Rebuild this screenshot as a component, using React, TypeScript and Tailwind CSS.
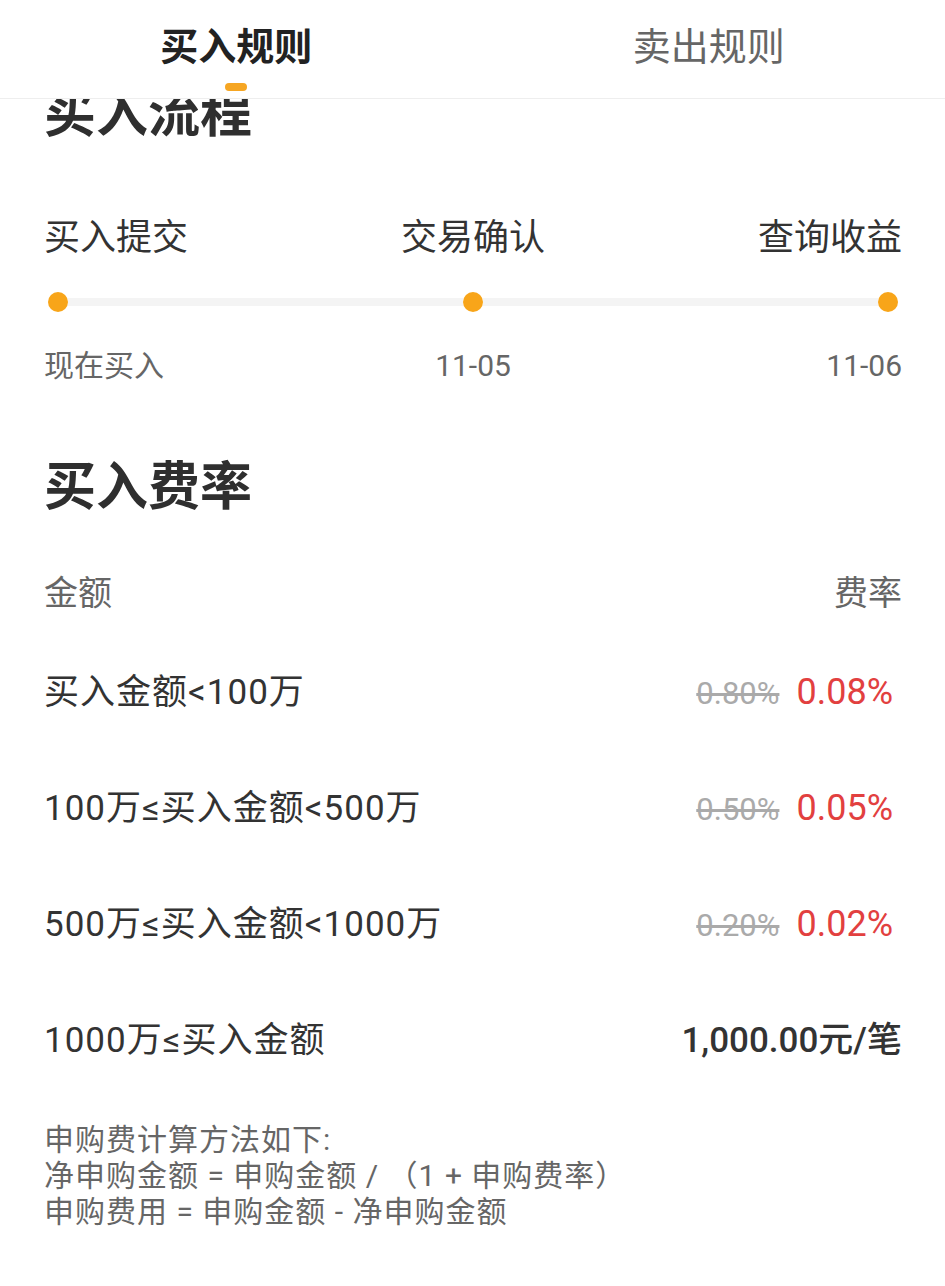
import React from 'react'

const FONT = 'font-["Roboto","Noto_Sans_CJK_SC",sans-serif]'

type Fee = {
  label: string
  old?: string
  rate?: string
  flat?: string
}

const fees: Fee[] = [
  { label: '买入金额<100万', old: '0.80%', rate: '0.08%' },
  { label: '100万≤买入金额<500万', old: '0.50%', rate: '0.05%' },
  { label: '500万≤买入金额<1000万', old: '0.20%', rate: '0.02%' },
  { label: '1000万≤买入金额', flat: '1,000.00元/笔' },
]

function Tabs() {
  return (
    <div className="sticky top-0 z-10 flex h-[99px] border-b border-[#eeeeee] bg-white">
      <div className="flex flex-1 flex-col items-center pt-[28px]">
        <span className="text-[38px] leading-[38px] font-bold text-[#222]">买入规则</span>
        <span className="mt-[17px] h-[8px] w-[22px] rounded-full bg-[#f6a623]" />
      </div>
      <div className="flex flex-1 flex-col items-center pt-[28px]">
        <span className="text-[38px] leading-[38px] text-[#666]">卖出规则</span>
      </div>
    </div>
  )
}

function Dot() {
  return <span className="h-[20px] w-[20px] shrink-0 rounded-full bg-[#f8a519]" />
}

export default function App() {
  return (
    <div className={`min-h-[1286px] bg-white ${FONT}`}>
      <Tabs />
      <div className="pl-[44px] pr-[43px] pb-[60px]">
        <h2 className="relative -mt-[10px] text-[52px] leading-[52px] font-bold text-[#2f2f2f]">买入流程</h2>

        <div className="mt-[79px] grid grid-cols-3 text-[36px] leading-[36px] text-[#333]">
          <span className="text-left">买入提交</span>
          <span className="text-center">交易确认</span>
          <span className="text-right">查询收益</span>
        </div>

        <div className="mt-[36px] flex items-center px-[4px]">
          <Dot />
          <span className="h-[8px] flex-1 bg-[#f4f4f4]" />
          <Dot />
          <span className="h-[8px] flex-1 bg-[#f4f4f4]" />
          <Dot />
        </div>

        <div className="mt-[39px] grid grid-cols-3 text-[30px] leading-[30px] text-[#666]">
          <span className="text-left">现在买入</span>
          <span className="text-center">11-05</span>
          <span className="text-right">11-06</span>
        </div>

        <h2 className="mt-[81px] text-[52px] leading-[52px] font-bold text-[#2f2f2f]">买入费率</h2>

        <div className="mt-[62px] flex justify-between text-[34px] leading-[34px] text-[#666]">
          <span>金额</span>
          <span>费率</span>
        </div>

        <div className="mt-[24px]">
          {fees.map((f) => (
            <div key={f.label} className="flex h-[116px] items-center justify-between text-[#333]">
              <span className="text-[35px] leading-[35px] tracking-[1px]">{f.label}</span>
              {f.flat ? (
                <span className="text-[35px] leading-[35px] font-medium text-[#333]">{f.flat}</span>
              ) : (
                <span className="flex items-baseline pr-[9px]">
                  <span className="text-[31px] leading-[31px] text-[#aaaaaa] line-through">{f.old}</span>
                  <span className="ml-[17px] text-[36px] leading-[36px] text-[#e2403f]">{f.rate}</span>
                </span>
              )}
            </div>
          ))}
        </div>

        <div className="mt-[24px] text-[30px] leading-[36px] tracking-[1px] text-[#666]">
          <p>申购费计算方法如下:</p>
          <p>净申购金额 = 申购金额 / （1 + 申购费率）</p>
          <p>申购费用 = 申购金额 - 净申购金额</p>
        </div>
      </div>
    </div>
  )
}
